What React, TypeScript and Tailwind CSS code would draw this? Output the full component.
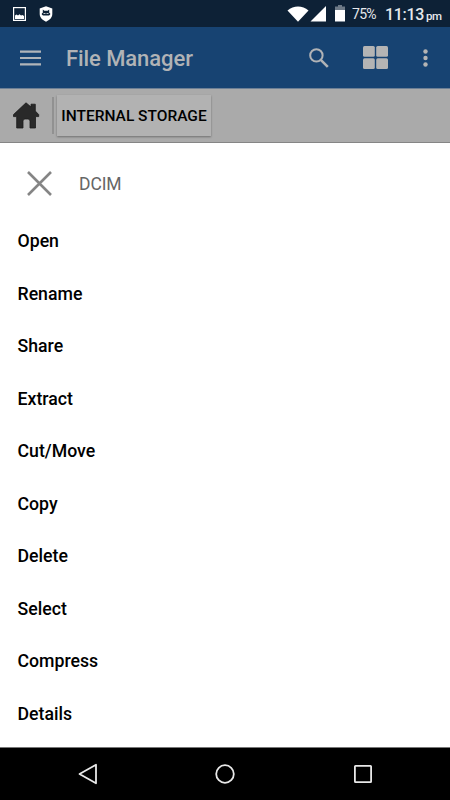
import React from 'react';

const actions = [
  'Open',
  'Rename',
  'Share',
  'Extract',
  'Cut/Move',
  'Copy',
  'Delete',
  'Select',
  'Compress',
  'Details',
];

const StatusBar: React.FC = () => (
  <div className="flex h-[27px] items-center bg-[#0d2136] pl-[13px] pr-[9px] text-[#e6e9ec]">
    <svg className="mt-px h-[14px] w-[13px]" viewBox="0 0 13 14">
      <rect x="0.6" y="0.6" width="11.8" height="12.8" fill="none" stroke="#fff" strokeWidth="1.2" />
      <path d="M2 12V8.500l1.500-1L5 8.500l1.500-1.300L8 8.500l1.500-.5L11 9v3z" fill="#fff" />
    </svg>
    <svg className="ml-[13px] h-[16px] w-[14px]" viewBox="0 0 14 16">
      <path d="M7 .3 13.300 2.500V8c0 3.600-2.800 6.200-6.300 7.700C3.500 14.200.700 11.600.700 8V2.500z" fill="#fff" />
      <path d="M3.800 3.500 5.300 4.800h3.400l1.500-1.300v3.300l1 .6v1.200L10 9.500H4L2.800 8.600V7.400l1-.6z" fill="#0d2136" />
      <path d="M4.500 7h2v.8h-2zM7.500 7h2v.8h-2z" fill="#fff" />
    </svg>
    <svg className="ml-auto h-[16px] w-[22px]" viewBox="0 0 22 16">
      <path d="M.5 4.500C6.500-.700 15.500-.700 21.500 4.500L11 15.700z" fill="#fff" />
    </svg>
    <svg className="ml-px h-[16px] w-[16px]" viewBox="0 0 16 16">
      <path d="M16 0v15.500H.5z" fill="#fff" />
    </svg>
    <svg className="ml-[9px] h-[17px] w-[10px]" viewBox="0 0 10 17">
      <path d="M3 0h4v1.500h3V6H0V1.500h3z" fill="#6d7986" />
      <path d="M0 5h10v11.500H0z" fill="#fff" />
    </svg>
    <span className="ml-[7px] w-[26px] text-[14px] leading-4 tracking-[-0.7px]">75%</span>
    <span className="ml-[7px] mt-[2px] w-[41px] text-[16px] font-medium leading-4 tracking-[-0.3px]">11:13</span>
    <span className="mt-[4px] w-[15px] text-[11.500px] font-medium leading-4 tracking-[-0.5px]">pm</span>
  </div>
);

const AppBar: React.FC = () => (
  <div className="flex h-[62px] items-center border-b border-[#6d8096] bg-[#174372] pl-[20px] pr-[22px]">
    <svg className="h-[16px] w-[21px]" viewBox="0 0 21 16" fill="#b1b5b9">
      <path d="M0 .5h21v2.200H0zM0 6.900h21v2.200H0zM0 13.200h21v2.200H0z" />
    </svg>
    <h1 className="ml-[25px] mt-[2px] text-[22px] font-medium leading-7 tracking-[-0.08px] text-[#b1b3b6]">File Manager</h1>
    <svg className="ml-auto h-[20px] w-[20px]" viewBox="0 0 20 20" fill="none" stroke="#b1b3b6">
      <circle cx="7.400" cy="7.400" r="6.200" strokeWidth="2" />
      <path d="M11.800 11.800 18.800 18.800" strokeWidth="2.600" />
    </svg>
    <svg className="ml-[34px] h-[23px] w-[25px]" viewBox="0 0 25 23" fill="#b4b4b4">
      <rect x="0" y="0" width="11.800" height="10.700" rx="1.500" />
      <rect x="13.200" y="0" width="11.800" height="10.700" rx="1.500" />
      <rect x="0" y="12.200" width="11.800" height="10.700" rx="1.500" />
      <rect x="13.200" y="12.200" width="11.800" height="10.700" rx="1.500" />
    </svg>
    <svg className="ml-[35px] h-[20px] w-[5px]" viewBox="0 0 5 20" fill="#b4b4b4">
      <circle cx="2.500" cy="3.500" r="2.200" />
      <circle cx="2.500" cy="10" r="2.200" />
      <circle cx="2.500" cy="16.500" r="2.200" />
    </svg>
  </div>
);

const Breadcrumb: React.FC = () => (
  <div className="flex h-[54px] items-center border-b border-[#858585] bg-[#aaaaaa] pl-[13px]">
    <svg className="h-[27px] w-[27px]" viewBox="0 0 27 27">
      <path
        d="M13 .8 18 5V2.200h4.300v6.800L25.700 12.600v2H22.500V26H17v-6.500c0-1.500-.9-2.500-2.300-2.500h-2.500c-1.400 0-2.200 1-2.200 2.500V26H3.700V14.600H.500v-2z"
        fill="#292929"
        stroke="#1c1c1c"
        strokeWidth="0.800"
        strokeLinejoin="round"
      />
    </svg>
    <div className="ml-[12px] h-[37px] w-[2px] bg-[#919191]" />
    <div className="ml-[3px] flex h-[41px] w-[154px] items-center justify-center bg-[#b2b2b2] shadow-[0_1px_2px_rgba(0,0,0,0.35)]">
      <span className="whitespace-nowrap text-[15.500px] font-medium leading-5 text-black">INTERNAL STORAGE</span>
    </div>
  </div>
);

const ActionSheet: React.FC = () => (
  <div className="h-[604px] bg-white">
    <div className="flex h-[72px] items-center pl-[27px] pt-[9px]">
      <svg className="h-[25px] w-[25px]" viewBox="0 0 25 25" fill="none" stroke="#858585" strokeWidth="2.600">
        <path d="M1 1 24 24M24 1 1 24" />
      </svg>
      <span className="ml-[27px] text-[17.500px] leading-6 tracking-[-0.1px] text-[#666666]">DCIM</span>
    </div>
    <ul>
      {actions.map((action) => (
        <li key={action} className="flex h-[52.5px] items-center pl-[17.500px] text-[17.700px] font-medium leading-6 text-black">
          {action}
        </li>
      ))}
    </ul>
  </div>
);

const NavBar: React.FC = () => (
  <div className="flex h-[53px] items-center border-t border-[#777777] bg-black pl-[78px] pr-[78px]">
    <svg className="h-[22px] w-[20px]" viewBox="0 0 20 22" fill="none" stroke="#e8e8e8" strokeWidth="1.800" strokeLinejoin="round">
      <path d="M1.500 11 18 1.700v18.600z" />
    </svg>
    <svg className="ml-[117px] h-[20px] w-[20px]" viewBox="0 0 20 20" fill="none" stroke="#e8e8e8" strokeWidth="1.800">
      <circle cx="10" cy="10" r="8.800" />
    </svg>
    <svg className="ml-auto h-[18px] w-[18px]" viewBox="0 0 18 18" fill="none" stroke="#e8e8e8" strokeWidth="1.800">
      <rect x="0.900" y="0.900" width="16.200" height="16.200" rx="0.600" />
    </svg>
  </div>
);

const App: React.FC = () => {
  return (
    <div className="h-[800px] w-[450px] overflow-hidden bg-black font-[Roboto,sans-serif]">
      <StatusBar />
      <AppBar />
      <Breadcrumb />
      <ActionSheet />
      <NavBar />
    </div>
  );
};

export default App;
